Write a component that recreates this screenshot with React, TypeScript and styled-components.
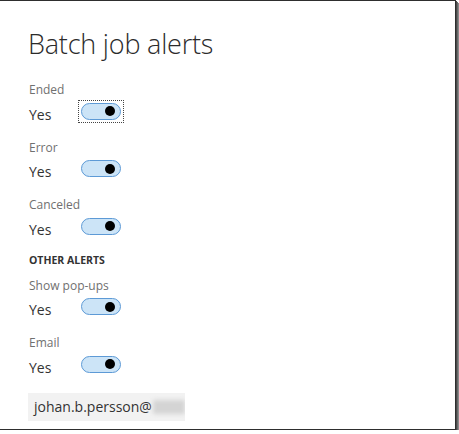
import React from 'react';
import styled, { createGlobalStyle } from 'styled-components';

const GlobalStyle = createGlobalStyle`
  html, body {
    margin: 0;
    padding: 0;
    background: #ffffff;
  }
  body {
    font-family: 'Open Sans', 'Noto Sans', 'Liberation Sans', sans-serif;
  }
`;

const Frame = styled.div`
  box-sizing: border-box;
  width: 456px;
  height: 430px;
  background: #ffffff;
  border-top: 1px solid #2e2e2e;
  border-right: 1px solid #2e2e2e;
  border-bottom: 1px solid #2e2e2e;
  box-shadow: 1px 1px 0 #4a4a4a, 2px 2px 0 #6a6a6a, 3px 3px 0 #8a8a8a;
  padding: 25px 0 0 28px;
`;

const Title = styled.h1`
  margin: 0 0 20px 0;
  font-size: 27px;
  line-height: 36px;
  font-weight: 300;
  color: #2b2b2b;
  letter-spacing: -0.2px;
`;

const Group = styled.div`
  display: flex;
  flex-direction: column;
  margin-bottom: 14.5px;
`;

const Label = styled.div`
  font-size: 12px;
  line-height: 16px;
  color: #707070;
  padding-left: 1px;
`;

const Row = styled.div`
  display: flex;
  align-items: center;
  height: 26px;
  margin-top: 1px;
`;

const Value = styled.span`
  width: 52px;
  padding: 4px 0 0 1px;
  font-size: 14px;
  color: #333333;
`;

const FocusRing = styled.span<{ $focused?: boolean }>`
  display: inline-flex;
  padding: 2px;
  margin: -4px -3px -2px -3px;
  border: 1px dotted ${p => (p.$focused ? '#444444' : 'transparent')};
`;

const Track = styled.span`
  box-sizing: border-box;
  position: relative;
  display: inline-block;
  width: 40px;
  height: 17px;
  border-radius: 9px;
  background: #cce4f7;
  border: 1px solid #5d9ad6;
`;

const Knob = styled.span`
  position: absolute;
  right: 5px;
  top: 2.5px;
  width: 10px;
  height: 10px;
  border-radius: 50%;
  background: #000000;
`;

const SectionHeading = styled.div`
  font-size: 10.5px;
  line-height: 14px;
  font-weight: 700;
  color: #333333;
  text-transform: uppercase;
  margin: -2px 0 11px 1px;
`;

const EmailBox = styled.div`
  display: flex;
  align-items: center;
  width: 157px;
  height: 28px;
  margin-top: 3px;
  padding-left: 6px;
  box-sizing: border-box;
  background: #f2f2f2;
  font-size: 14px;
  color: #333333;
  overflow: hidden;
`;

const Blur = styled.span`
  display: inline-block;
  width: 38px;
  height: 14px;
  margin-left: 1px;
  background: #d4d4d4;
  filter: blur(2px);
`;

const Toggle: React.FC<{ focused?: boolean }> = ({ focused }) => (
  <FocusRing $focused={focused}>
    <Track>
      <Knob />
    </Track>
  </FocusRing>
);

const Setting: React.FC<{ label: string; focused?: boolean }> = ({ label, focused }) => (
  <Group>
    <Label>{label}</Label>
    <Row>
      <Value>Yes</Value>
      <Toggle focused={focused} />
    </Row>
  </Group>
);

const App: React.FC = () => (
  <>
    <GlobalStyle />
    <Frame>
      <Title>Batch job alerts</Title>
      <Setting label="Ended" focused />
      <Setting label="Error" />
      <Setting label="Canceled" />
      <SectionHeading>Other alerts</SectionHeading>
      <Setting label="Show pop-ups" />
      <Setting label="Email" />
      <EmailBox>
        johan.b.persson@<Blur />
      </EmailBox>
    </Frame>
  </>
);

export default App;
